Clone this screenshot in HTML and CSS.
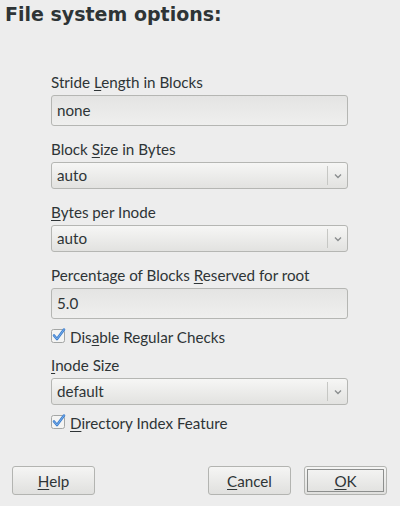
FILE: index.html
```html
<!DOCTYPE html>
<html>
<head>
<meta charset="utf-8">
<link rel="stylesheet" href="styles.css">
</head>
<body>
<div class="dialog">
  <h1 class="title">File system options:</h1>
  <div class="form">
    <div class="label">Stride <u>L</u>ength in Blocks</div>
    <div class="entry">none</div>

    <div class="label">Block <u>S</u>ize in Bytes</div>
    <div class="combo"><span class="combo-text">auto</span><span class="combo-sep"></span><svg class="chev" width="8" height="6" viewBox="0 0 8 6"><path d="M1 1.5 L4 4.5 L7 1.5" fill="none" stroke="#8b8e8f" stroke-width="1.4"/></svg></div>

    <div class="label"><u>B</u>ytes per Inode</div>
    <div class="combo"><span class="combo-text">auto</span><span class="combo-sep"></span><svg class="chev" width="8" height="6" viewBox="0 0 8 6"><path d="M1 1.5 L4 4.5 L7 1.5" fill="none" stroke="#8b8e8f" stroke-width="1.4"/></svg></div>

    <div class="label">Percentage of Blocks <u>R</u>eserved for root</div>
    <div class="entry">5.0</div>

    <div class="check"><svg class="cb" width="18" height="16" viewBox="0 0 18 16"><rect x="0.5" y="2.5" width="13" height="13" rx="2" fill="#f4f4f3" stroke="#a4a6a5"/><path d="M3 8.5 L6 12 L13 2.5" fill="none" stroke="#3d7fcf" stroke-width="2.6" stroke-linecap="round" stroke-linejoin="round"/><path d="M3 8.5 L6 12 L13 2.5" fill="none" stroke="#79aee9" stroke-width="1" stroke-linecap="round" stroke-linejoin="round"/></svg><span>Dis<u>a</u>ble Regular Checks</span></div>

    <div class="label label-after-check"><u>I</u>node Size</div>
    <div class="combo"><span class="combo-text">default</span><span class="combo-sep"></span><svg class="chev" width="8" height="6" viewBox="0 0 8 6"><path d="M1 1.5 L4 4.5 L7 1.5" fill="none" stroke="#8b8e8f" stroke-width="1.4"/></svg></div>

    <div class="check"><svg class="cb" width="18" height="16" viewBox="0 0 18 16"><rect x="0.5" y="2.5" width="13" height="13" rx="2" fill="#f4f4f3" stroke="#a4a6a5"/><path d="M3 8.5 L6 12 L13 2.5" fill="none" stroke="#3d7fcf" stroke-width="2.6" stroke-linecap="round" stroke-linejoin="round"/><path d="M3 8.5 L6 12 L13 2.5" fill="none" stroke="#79aee9" stroke-width="1" stroke-linecap="round" stroke-linejoin="round"/></svg><span><u>D</u>irectory Index Feature</span></div>
  </div>
  <div class="buttons">
    <button class="btn"><u>H</u>elp</button>
    <div class="spacer"></div>
    <button class="btn"><u>C</u>ancel</button>
    <button class="btn btn-default"><span class="focus"><u>O</u>K</span></button>
  </div>
</div>
</body>
</html>
```
FILE: styles.css
```css
html, body {
  margin: 0;
  padding: 0;
  background: #ededed;
}
body {
  width: 400px;
  height: 506px;
  overflow: hidden;
  font-family: "Lato", "Open Sans", sans-serif;
  font-size: 15.2px;
  color: #2e3436;
}
.dialog {
  display: flex;
  flex-direction: column;
  height: 506px;
}
.title {
  margin: 0;
  padding: 3px 0 0 5px;
  height: 25px;
  font-family: "DejaVu Sans", sans-serif;
  font-weight: bold;
  font-size: 19px;
  line-height: 22px;
  color: #2e3436;
}
.form {
  display: flex;
  flex-direction: column;
  margin: 45px 0 0 51px;
  width: 297px;
}
u {
  text-decoration: underline;
  text-underline-offset: 2px;
  text-decoration-thickness: 1px;
}
.label {
  height: 18px;
  line-height: 18px;
  margin-bottom: 4px;
}
.entry {
  height: 29px;
  line-height: 29px;
  border: 1px solid #b5b6b3;
  border-radius: 3px;
  background: linear-gradient(#e4e4e3, #efefee);
  padding-left: 5px;
  margin-bottom: 14px;
}
.combo {
  display: flex;
  align-items: center;
  height: 25px;
  border: 1px solid #b5b6b3;
  border-radius: 3px;
  background: linear-gradient(#f6f6f5, #e2e2e0);
  padding-left: 5px;
  margin-bottom: 14px;
}
.combo-text {
  flex: 1;
  line-height: 25px;
}
.combo-sep {
  width: 1px;
  height: 19px;
  background: #c6c7c4;
  margin-right: 6px;
}
.chev {
  margin-right: 5px;
}
.check {
  display: flex;
  align-items: center;
  height: 18px;
  gap: 1px;
  margin-top: -5px;
}
.cb {
  margin-top: -4px;
}
.label-after-check {
  margin-top: 10px;
}
.buttons {
  display: flex;
  margin-top: auto;
  padding: 0 13px 11px 12px;
  gap: 13px;
}
.spacer {
  flex: 1;
}
.btn {
  width: 83px;
  height: 29px;
  border: 1px solid #b3b4b1;
  border-radius: 3px;
  background: linear-gradient(#f5f5f4, #e0e0de);
  font-family: inherit;
  font-size: 15.2px;
  color: #2e3436;
  padding: 0;
  display: flex;
  align-items: center;
  justify-content: center;
}
.btn-default {
  padding: 2px;
}
.focus {
  display: flex;
  align-items: center;
  justify-content: center;
  width: 100%;
  height: 100%;
  border: 1px solid #8d8f8e;
  box-sizing: border-box;
}
```
